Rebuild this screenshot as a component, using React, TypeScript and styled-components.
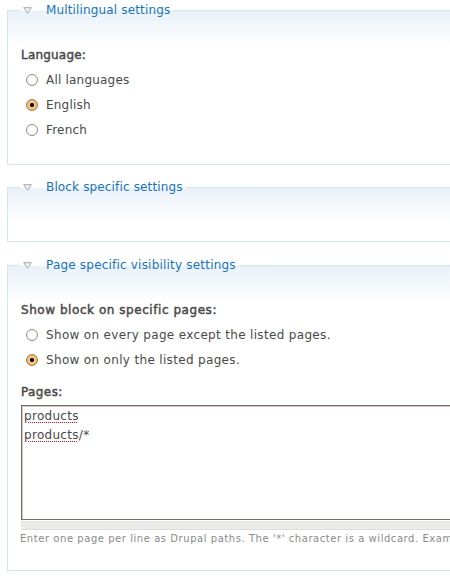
import React from "react";
import styled, { createGlobalStyle } from "styled-components";

const Global = createGlobalStyle`
  html, body { margin: 0; padding: 0; background: #ffffff; }
  body {
    font-family: "DejaVu Sans", Verdana, sans-serif;
    font-size: 12px;
    color: #494949;
    overflow: hidden;
  }
`;

const Page = styled.div`
  width: 540px;
  padding-left: 7px;
`;

const Fieldset = styled.fieldset<{ $gap: number; $padBottom: number }>`
  margin: 0 0 ${(p) => p.$gap}px;
  padding: 0 13px ${(p) => p.$padBottom}px;
  border: 1px solid #d6e4ef;
  background: linear-gradient(to bottom, #e9f1f8 0px, #ffffff 36px) no-repeat;
  min-width: 0;
`;

const Legend = styled.legend<{ $ls: number }>`
  margin-left: -1px;
  padding: 0 3px 0 3px;
  height: 20px;
  line-height: 21px;
  color: #1573c0;
  letter-spacing: ${(p) => p.$ls}px;
  white-space: nowrap;
`;

const Arrow = styled.svg`
  display: inline-block;
  vertical-align: top;
  margin: 7px 14px 0 0;
`;

const GroupLabel = styled.div<{ $ls: number }>`
  margin-top: 26px;
  height: 18px;
  line-height: 19px;
  font-weight: normal;
  -webkit-text-stroke: 0.45px #494949;
  letter-spacing: ${(p) => p.$ls}px;
  white-space: nowrap;
`;

const RadioList = styled.div`
  margin-top: 3px;
  display: flex;
  flex-direction: column;
`;

const RadioRow = styled.label<{ $ls: number }>`
  display: flex;
  align-items: center;
  height: 25px;
  padding-left: 5px;
  gap: 8px;
  letter-spacing: ${(p) => p.$ls}px;
  white-space: nowrap;
`;

const RadioDot = styled.span<{ $checked?: boolean }>`
  flex: none;
  width: 12px;
  height: 12px;
  box-sizing: border-box;
  border-radius: 50%;
  border: 1px solid ${(p) => (p.$checked ? "#a9794a" : "#948d86")};
  background: ${(p) =>
    p.$checked
      ? "radial-gradient(circle at 50% 50%, #111 0, #111 1.8px, #fbe3bf 2.6px, #f6c27d 3.2px, #f0a64c 100%)"
      : "radial-gradient(circle at 50% 40%, #ffffff 0, #ffffff 3px, #efedeb 100%)"};
`;

const FieldLabel = styled(GroupLabel)`
  margin-top: 11px;
`;

const TextBox = styled.div`
  margin-top: 4px;
  width: 480px;
  height: 115px;
  box-sizing: border-box;
  border: 1px solid #756d66;
  box-shadow: inset 1px 1px 0 #cfc9c3;
  background: #ffffff;
  padding: 1px 2px;
  line-height: 19px;
  letter-spacing: 0.3px;
  color: #494949;
`;

const Line = styled.div`
  white-space: nowrap;
`;

const Misspelled = styled.span`
  text-decoration: underline dotted #e01010;
  text-decoration-thickness: 1px;
  text-underline-offset: 2px;
`;

const Grippie = styled.div`
  margin-top: 1px;
  width: 480px;
  height: 9px;
  box-sizing: border-box;
  background: #ebebeb;
  border-top: 1px solid #e2e2e2;
  border-bottom: 1px solid #dddddd;
`;

const Description = styled.div`
  margin-top: 1px;
  height: 14px;
  line-height: 15px;
  font-size: 10px;
  letter-spacing: 0.55px;
  color: #8a8a8a;
  white-space: nowrap;
  overflow: hidden;
  margin-left: -1px;
`;

function Triangle() {
  return (
    <Arrow width="9" height="7" viewBox="0 0 9 7">
      <path d="M0.7 0.7 H8.3 L4.5 6.3 Z" fill="#f4f4f4" stroke="#a7a7a7" strokeWidth="1" strokeLinejoin="round" />
    </Arrow>
  );
}

function Radio({ label, checked, ls }: { label: string; checked?: boolean; ls: number }) {
  return (
    <RadioRow $ls={ls}>
      <RadioDot $checked={checked} />
      <span>{label}</span>
    </RadioRow>
  );
}

export default function App() {
  return (
    <>
      <Global />
      <Page>
        <Fieldset $gap={12} $padBottom={22}>
          <Legend $ls={0.15}>
            <Triangle />
            Multilingual settings
          </Legend>
          <GroupLabel $ls={0.2}>Language:</GroupLabel>
          <RadioList>
            <Radio label="All languages" ls={0.2} />
            <Radio label="English" checked ls={0.2} />
            <Radio label="French" ls={0.2} />
          </RadioList>
        </Fieldset>

        <Fieldset $gap={13} $padBottom={44}>
          <Legend $ls={0.15}>
            <Triangle />
            Block specific settings
          </Legend>
        </Fieldset>

        <Fieldset $gap={0} $padBottom={25}>
          <Legend $ls={0.2}>
            <Triangle />
            Page specific visibility settings
          </Legend>
          <GroupLabel $ls={0.55}>Show block on specific pages:</GroupLabel>
          <RadioList>
            <Radio label="Show on every page except the listed pages." ls={0.33} />
            <Radio label="Show on only the listed pages." checked ls={0.33} />
          </RadioList>
          <FieldLabel $ls={0.4}>Pages:</FieldLabel>
          <TextBox>
            <Line>
              <Misspelled>products</Misspelled>
            </Line>
            <Line>
              <Misspelled>products</Misspelled>/*
            </Line>
          </TextBox>
          <Grippie />
          <Description>
            Enter one page per line as Drupal paths. The '*' character is a wildcard. Example paths are blog for the blog page and blog/* for every personal blog. &lt;front&gt; is the front page.
          </Description>
        </Fieldset>
      </Page>
    </>
  );
}
